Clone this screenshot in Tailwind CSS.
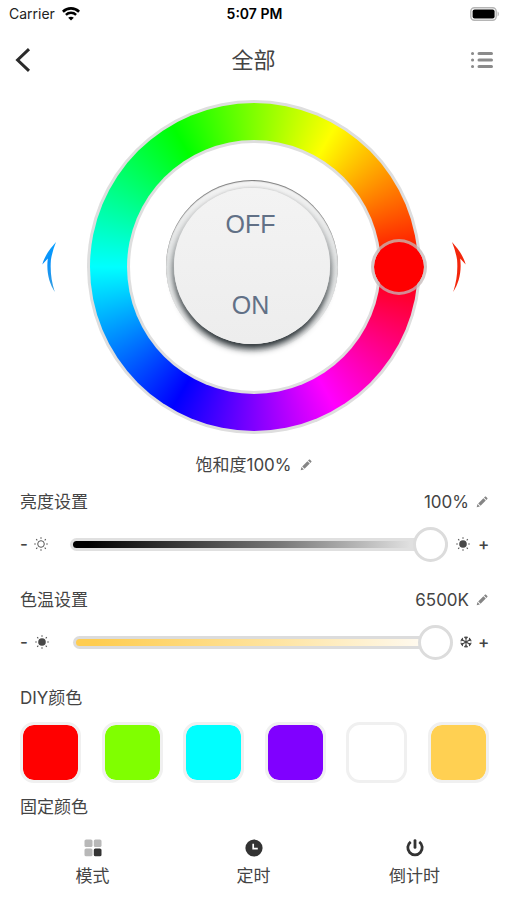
<!DOCTYPE html>
<html lang="zh-CN">
<head>
<meta charset="utf-8">
<meta name="viewport" content="width=device-width, initial-scale=1">
<title>全部</title>
<script src="https://cdn.jsdelivr.net/npm/@tailwindcss/browser@4"></script>
</head>
<body class="bg-white">
<svg class="hidden" aria-hidden="true">
  <symbol id="pencil" viewBox="0 0 12 12">
    <path d="M.7 11.300l.8-3.200 2.400 2.400zM2.200 7.400l5.200-5.200 2.400 2.400-5.200 5.200zM8 1.600l.9-.9c.4-.4.8-.4 1.200 0l1.200 1.200c.4.4.4.800 0 1.200l-.9.9z" fill="#858585"/>
  </symbol>
  <symbol id="sun-rays" viewBox="0 0 14 14">
    <path d="M7 .2v1.600M7 12.200v1.600M.2 7h1.600M12.200 7h1.600M2.200 2.200l1.100 1.100M10.700 10.700l1.100 1.100M2.200 11.800l1.100-1.100M10.700 3.300l1.100-1.100" stroke="#555" stroke-width="1.100" fill="none"/>
  </symbol>
</svg>
<div class="flex min-h-screen flex-col bg-white font-['Inter','Noto_Sans_CJK_SC',sans-serif] text-[17px] leading-6 text-[#444]">

  <div class="grid h-7 grid-cols-3 items-center pr-[7px] pl-[9px] text-sm text-[#222]">
    <div class="flex items-center gap-[7px]">
      <span>Carrier</span>
      <svg class="h-[14px] w-[18px]" viewBox="0 0 18 14" fill="none" stroke="#000" aria-hidden="true">
        <path d="M.9 4.700C5.400.3 12.600.3 17.100 4.700" stroke-width="2.600"/>
        <path d="M3.900 7.900c2.800-2.800 7.400-2.800 10.200 0" stroke-width="2.400"/>
        <path d="M9 13.600L6.200 10.800c1.500-1.500 4.100-1.500 5.600 0z" fill="#000" stroke="none"/>
      </svg>
    </div>
    <div class="text-center font-semibold text-black">5:07 PM</div>
    <svg class="h-[14px] w-[30px] justify-self-end" viewBox="0 0 30 14" aria-hidden="true">
      <rect x=".8" y=".8" width="25.400" height="12.400" rx="3.600" fill="#fff" stroke="#b5b5b5" stroke-width="1.400"/>
      <rect x="2.600" y="2.600" width="22" height="8.800" rx="2" fill="#000"/>
      <path d="M27.600 4.600c1.600.5 1.600 4.300 0 4.800z" fill="#b0b0b0"/>
    </svg>
  </div>

  <header class="grid h-16 grid-cols-[40px_1fr_40px] items-center px-[13px]">
    <button type="button" class="flex h-10 items-center pl-0.5" aria-label="返回">
      <svg class="h-6 w-4" viewBox="0 0 16 24" fill="none" stroke="#2b2b2b" stroke-width="3"><path d="M14 1.200L2.600 12 14 22.800"/></svg>
    </button>
    <h1 class="text-center text-[22px] leading-8">全部</h1>
    <button type="button" class="flex h-10 items-center justify-end" aria-label="列表">
      <svg class="h-[18px] w-6" viewBox="0 0 24 18" fill="none" stroke="#8b8b8b" stroke-width="3" stroke-linecap="round"><path d="M9 2.500h12.500M9 9h12.500M9 15.500h12.500M2.500 2.500h.1M2.500 9h.1M2.500 15.500h.1"/></svg>
    </button>
  </header>

  <main class="flex-1">
    <section class="flex items-center justify-center gap-[30px] pt-2" aria-label="色环">
      <svg class="h-[50px] w-4" viewBox="0 0 16 50" aria-hidden="true">
        <defs><linearGradient id="cool" x1="0" y1="0" x2="0" y2="1"><stop offset="0" stop-color="#08a0ff"/><stop offset=".4" stop-color="#0890f8"/><stop offset="1" stop-color="#3aa0e0"/></linearGradient></defs>
        <path d="M15 0C9 7 4 13 1.300 22.500L6.800 16.500C5.200 30 8 41 13.800 50 10.300 39 9.100 29 9.900 18 10.800 12 12.600 6 15 0z" fill="url(#cool)"/>
      </svg>
      <div class="relative size-[334px] rounded-full bg-[#dedede] p-[3px]">
        <div class="size-full rounded-full bg-[conic-gradient(from_90deg,#f00,#f0f,#00f,#0ff,#0f0,#ff0,#f00)] p-[37px]">
          <div class="size-full rounded-full bg-[#dedede] p-[3px]">
            <div class="flex size-full items-center justify-center rounded-full bg-white pr-1 pb-0.5">
              <div class="size-[172px] rounded-full bg-linear-to-b from-[#f4f4f4] via-[#e2e4e4] to-white p-2 shadow-[inset_0_1px_1px_#777]">
                <div class="flex size-full flex-col items-center justify-between rounded-full bg-linear-to-b from-[#f3f3f3] to-[#ededed] pt-5 pr-0.5 pb-[23px] font-['Liberation_Sans',sans-serif] text-[25px] leading-8 text-[#617086] shadow-[0_-1px_2px_#d8d8d8,0_5px_7px_#20282c]">
                  <button type="button">OFF</button>
                  <button type="button">ON</button>
                </div>
              </div>
            </div>
          </div>
        </div>
        <button type="button" class="absolute top-1/2 -right-[6px] size-[56px] -translate-y-1/2 rounded-full border-[3px] border-[#c4b8b8]/75 bg-[#f00] bg-clip-padding" aria-label="色相"></button>
      </div>
      <svg class="h-[50px] w-4" viewBox="0 0 16 50" aria-hidden="true">
        <path d="M1 0C7 7 12 13 14.700 22.500L9.200 16.500C10.800 30 8 41 2.200 50 5.700 39 6.900 29 6.100 18 5.200 12 3.400 6 1 0z" fill="#f3260b"/>
      </svg>
    </section>

    <div class="mt-4 flex h-[30px] items-center justify-center gap-2">
      <span>饱和度100%</span>
      <button type="button" aria-label="编辑饱和度"><svg class="size-3"><use href="#pencil"/></svg></button>
    </div>

    <section class="mt-1 pr-[19px] pl-5">
      <div class="flex h-9 items-center justify-between">
        <label for="brightness">亮度设置</label>
        <div class="flex items-center gap-[7px]">
          <output for="brightness">100%</output>
          <button type="button" aria-label="编辑亮度"><svg class="size-3"><use href="#pencil"/></svg></button>
        </div>
      </div>
      <div class="mt-1.5 flex h-9 items-center">
        <button type="button" class="w-2 text-left font-medium" aria-label="降低亮度">-</button>
        <svg class="ml-1.5 size-[14px] shrink-0" viewBox="0 0 14 14" aria-hidden="true"><use href="#sun-rays"/><circle cx="7" cy="7" r="3.300" fill="#fff" stroke="#555"/></svg>
        <input id="brightness" type="range" min="0" max="100" value="100" class="ml-[22px] h-[13px] min-w-0 flex-1 appearance-none rounded-full bg-[#e0e0e0] pl-[3px] [&::-webkit-slider-runnable-track]:h-[7px] [&::-webkit-slider-runnable-track]:rounded-full [&::-webkit-slider-runnable-track]:bg-[linear-gradient(to_right,#000_4%,#777_55%,#e0e0e0_90%)] [&::-webkit-slider-thumb]:-mt-[14px] [&::-webkit-slider-thumb]:size-[35px] [&::-webkit-slider-thumb]:appearance-none [&::-webkit-slider-thumb]:rounded-full [&::-webkit-slider-thumb]:border-[3px] [&::-webkit-slider-thumb]:border-[#dcdcdc] [&::-webkit-slider-thumb]:bg-white">
        <svg class="ml-2 size-[14px] shrink-0" viewBox="0 0 14 14" aria-hidden="true"><use href="#sun-rays"/><circle cx="7" cy="7" r="3.800" fill="#484848"/></svg>
        <button type="button" class="ml-2 w-[10px] font-medium" aria-label="提高亮度">+</button>
      </div>
    </section>

    <section class="mt-5 pr-[19px] pl-5">
      <div class="flex h-9 items-center justify-between">
        <label for="temperature">色温设置</label>
        <div class="flex items-center gap-[7px]">
          <output for="temperature">6500K</output>
          <button type="button" aria-label="编辑色温"><svg class="size-3"><use href="#pencil"/></svg></button>
        </div>
      </div>
      <div class="mt-1.5 flex h-9 items-center">
        <button type="button" class="w-2 text-left font-medium" aria-label="降低色温">-</button>
        <svg class="ml-[7px] size-[14px] shrink-0" viewBox="0 0 14 14" aria-hidden="true"><use href="#sun-rays"/><circle cx="7" cy="7" r="3.800" fill="#484848"/></svg>
        <input id="temperature" type="range" min="2700" max="6500" value="6500" class="ml-6 h-[13px] min-w-0 flex-1 appearance-none rounded-full bg-[#dcdcdc] pl-[3px] [&::-webkit-slider-runnable-track]:h-[7px] [&::-webkit-slider-runnable-track]:rounded-full [&::-webkit-slider-runnable-track]:bg-[linear-gradient(to_right,#ffcd50_5%,#ffe5a4_55%,#fffaf0_92%)] [&::-webkit-slider-thumb]:-mt-[14px] [&::-webkit-slider-thumb]:size-[35px] [&::-webkit-slider-thumb]:appearance-none [&::-webkit-slider-thumb]:rounded-full [&::-webkit-slider-thumb]:border-[3px] [&::-webkit-slider-thumb]:border-[#dcdcdc] [&::-webkit-slider-thumb]:bg-white">
        <svg class="ml-[7px] size-3 shrink-0" viewBox="0 0 12 12" fill="none" stroke="#484848" stroke-width="1.100" aria-hidden="true">
          <path d="M6 .3v11.400M1.100 3.200l9.800 5.600M1.100 8.800l9.800-5.600M4.300 .9L6 2.600 7.700.9M4.300 11.100L6 9.400l1.700 1.700M.5 5l2.300-.8-.5-2.300M11.500 7l-2.300.8.5 2.300M.5 7l2.300.8-.5 2.300M11.500 5l-2.300-.8.5-2.300"/>
        </svg>
        <button type="button" class="ml-1.5 w-[10px] font-medium" aria-label="提高色温">+</button>
      </div>
    </section>

    <section class="mt-5 pr-[18px] pl-5">
      <h2 class="flex h-9 items-center">DIY颜色</h2>
      <div class="mt-1.5 flex justify-between">
        <button type="button" class="size-[61px] rounded-[14px] border-[3px] border-[#f0f0f0] bg-[#f00] bg-clip-padding" aria-label="红色"></button>
        <button type="button" class="size-[61px] rounded-[14px] border-[3px] border-[#f0f0f0] bg-[#80ff00] bg-clip-padding" aria-label="绿色"></button>
        <button type="button" class="size-[61px] rounded-[14px] border-[3px] border-[#f0f0f0] bg-[#0ff] bg-clip-padding" aria-label="青色"></button>
        <button type="button" class="size-[61px] rounded-[14px] border-[3px] border-[#f0f0f0] bg-[#8000ff] bg-clip-padding" aria-label="紫色"></button>
        <button type="button" class="size-[61px] rounded-[14px] border-[3px] border-[#f0f0f0] bg-white bg-clip-padding" aria-label="白色"></button>
        <button type="button" class="size-[61px] rounded-[14px] border-[3px] border-[#f0f0f0] bg-[#ffd052] bg-clip-padding" aria-label="暖黄"></button>
      </div>
      <h2 class="mt-1.5 flex h-9 items-center">固定颜色</h2>
    </section>
  </main>

  <nav class="grid grid-cols-3 px-3 pb-3">
    <a href="#mode" class="flex flex-col items-center gap-[7px]">
      <svg class="size-[18px]" viewBox="0 0 18 18" fill="#b8b8b8" aria-hidden="true"><rect x=".5" y=".5" width="8" height="7.600" rx="1.600"/><rect x="9.800" y=".5" width="7.700" height="7.600" rx="1.600"/><rect x=".5" y="9.500" width="8" height="7.800" rx="1.600"/><rect x="9.800" y="9.500" width="7.700" height="7.800" rx="1.600" fill="#333"/></svg>
      <span>模式</span>
    </a>
    <a href="#timer" class="flex flex-col items-center gap-[7px]">
      <svg class="size-[18px]" viewBox="0 0 18 18" aria-hidden="true"><circle cx="9" cy="9" r="8.600" fill="#333"/><path d="M8.200 4.800v4.800h4.600" fill="none" stroke="#fff" stroke-width="1.700"/></svg>
      <span>定时</span>
    </a>
    <a href="#countdown" class="flex flex-col items-center gap-[7px]">
      <svg class="size-[18px]" viewBox="0 0 18 18" fill="none" stroke="#333" stroke-width="2.800" aria-hidden="true"><path d="M4.700 2.900a7.200 7.200 0 1 0 8.600 0"/><path d="M9 1.600v6.800" stroke-linecap="round"/></svg>
      <span>倒计时</span>
    </a>
  </nav>
</div>
</body>
</html>
